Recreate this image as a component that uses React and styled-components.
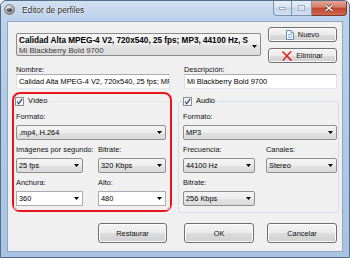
import React from 'react';
import styled, { createGlobalStyle } from 'styled-components';

const GlobalStyle = createGlobalStyle`
  html, body {
    margin: 0;
    padding: 0;
  }
  body {
    width: 350px;
    height: 258px;
    overflow: hidden;
    background: #ffffff;
    font-family: "Liberation Sans", Arial, sans-serif;
    color: #000;
  }
`;

const Window = styled.div`
  width: 350px;
  height: 258px;
  box-sizing: border-box;
  display: flex;
  flex-direction: column;
  border: 1px solid #566d88;
  border-radius: 6px 6px 0 0;
  background: linear-gradient(180deg, #d2e1f1 0px, #bcd1ea 18px, #b1cae7 120px, #a8c3e4 100%);
  overflow: hidden;
`;

const TitleBar = styled.div`
  height: 20px;
  flex-shrink: 0;
  display: flex;
  align-items: flex-start;
`;

const AppIcon = styled.svg`
  width: 11px;
  height: 11px;
  margin: 3px 0 0 3px;
  flex-shrink: 0;
`;

const Title = styled.div`
  margin: 4px 0 0 7px;
  font-size: 8.3px;
  line-height: 10px;
  color: #1c1c1c;
  text-shadow: 0 0 3px #ffffff, 0 0 1px #ffffff;
`;

const CaptionButtons = styled.div`
  display: flex;
  margin: 0 2px 0 auto;
`;

const CaptionButton = styled.div`
  width: ${p => p.$w}px;
  height: 15px;
  box-sizing: border-box;
  display: flex;
  align-items: center;
  justify-content: center;
  border: 1px solid ${p => (p.$close ? '#7b3a33' : '#7d93ad')};
  border-top: none;
  background: ${p =>
    p.$close
      ? 'linear-gradient(180deg, #e6a697 0%, #d67a66 45%, #c2452e 50%, #cf6a4f 100%)'
      : 'linear-gradient(180deg, #e7eff8 0%, #d6e2f0 45%, #c3d3e7 50%, #d2e0f0 100%)'};
  & + & {
    border-left: none;
  }
  &:first-child {
    border-bottom-left-radius: 4px;
  }
  &:last-child {
    border-bottom-right-radius: 4px;
  }
`;

const Frame = styled.div`
  flex: 1;
  display: flex;
  padding: 0 6px 5px;
`;

const Client = styled.div`
  flex: 1;
  display: flex;
  flex-direction: column;
  background: #f0f0f0;
  border: 1px solid #8ea6c2;
  font-size: 7.4px;
`;

const TopRow = styled.div`
  display: flex;
  align-items: flex-start;
  margin-top: 5px;
  padding-left: 8px;
`;

const ProfileCombo = styled.div`
  position: relative;
  width: 245px;
  height: 23px;
  box-sizing: border-box;
  margin-top: 6px;
  padding: 2px 3px 0 2px;
  border: 1px solid #8a8a8a;
  border-radius: 2px;
  background: linear-gradient(180deg, #f6f6f6 0%, #eeeeee 50%, #e4e4e4 51%, #dcdcdc 100%);
  overflow: hidden;
  white-space: nowrap;
`;

const ComboTitle = styled.div`
  font-size: 8.2px;
  font-weight: bold;
  line-height: 10px;
`;

const ComboSub = styled.div`
  font-size: 7.8px;
  line-height: 10px;
  color: #3a3a3a;
`;

const ComboArrow = styled.svg`
  position: absolute;
  right: 3px;
  top: 11px;
  width: 5px;
  height: 3px;
`;

const SideButtons = styled.div`
  display: flex;
  flex-direction: column;
  gap: 6px;
  margin-left: 7px;
`;

const Button = styled.div`
  width: ${p => p.$w || 69}px;
  height: ${p => p.$h || 15}px;
  box-sizing: border-box;
  display: flex;
  align-items: center;
  justify-content: center;
  gap: 4px;
  border: 1px solid #707070;
  border-radius: 3px;
  box-shadow: inset 0 0 0 1px #fbfbfb;
  background: linear-gradient(180deg, #f3f3f3 0%, #ebebeb 50%, #dddddd 51%, #cfcfcf 100%);
  font-size: 7.4px;
  color: #111;
`;

const FieldRow = styled.div`
  display: grid;
  grid-template-columns: 154px 153px;
  column-gap: 14px;
  margin: 2px 0 0 8px;
`;

const Field = styled.div`
  display: flex;
  flex-direction: column;
  min-width: 0;
`;

const Label = styled.div`
  height: ${p => p.$h || 9}px;
  line-height: ${p => p.$h || 9}px;
  margin-bottom: ${p => p.$mb || 0}px;
  white-space: nowrap;
  color: #111;
`;

const TextInput = styled.div`
  height: 15px;
  box-sizing: border-box;
  display: flex;
  align-items: center;
  padding: 0 2px;
  background: #ffffff;
  border: 1px solid #abadb3;
  border-left-color: #dbdfe6;
  border-right-color: #dbdfe6;
  border-bottom-color: #e3e9ef;
  overflow: hidden;
  white-space: nowrap;
`;

const GroupRow = styled.div`
  display: flex;
  align-items: flex-start;
  gap: 6px;
  margin: 3px 0 0 4px;
`;

const Highlight = styled.div`
  width: 160px;
  height: 120px;
  box-sizing: border-box;
  display: flex;
  padding: 2px 0 0;
  border: 2px solid #e8151d;
  border-radius: 8px;
`;

const Group = styled.fieldset`
  margin: ${p => p.$mt || 0}px 0 0;
  padding: 0;
  min-width: 0;
  flex: ${p => (p.$w ? 'none' : 1)};
  width: ${p => (p.$w ? `${p.$w}px` : 'auto')};
  height: ${p => (p.$h ? `${p.$h}px` : 'auto')};
  box-sizing: border-box;
  border: 1px solid ${p => (p.$faint ? '#e6e9ec' : '#d5dfe5')};
  border-radius: 3px;
`;

const Legend = styled.legend`
  display: flex;
  align-items: center;
  gap: 4px;
  height: 10px;
  line-height: 10px;
  padding: 0 2px 0 0;
  margin-left: ${p => p.$ml}px;
`;

const CheckBox = styled.div`
  width: 9px;
  height: 9px;
  box-sizing: border-box;
  display: flex;
  align-items: center;
  justify-content: center;
  border: 1px solid #8e8f8f;
  background: linear-gradient(135deg, #dcdcdc 0%, #f4f4f4 60%, #ffffff 100%);
  box-shadow: inset 0 0 0 1px #f4f4f4;
`;

const GroupBody = styled.div`
  display: flex;
  flex-direction: column;
  gap: 5px;
  padding: 6px ${p => p.$pr}px 0 ${p => p.$pl}px;
`;

const Pair = styled.div`
  display: grid;
  grid-template-columns: ${p => p.$cols};
  column-gap: ${p => p.$gap}px;
`;

const Select = styled.div`
  height: 15px;
  box-sizing: border-box;
  display: flex;
  align-items: center;
  padding: 0 3px 0 2px;
  border: 1px solid ${p => (p.$editable ? '#abadb3' : '#8e8f8f')};
  border-radius: ${p => (p.$editable ? 0 : 2)}px;
  background: ${p =>
    p.$editable
      ? '#ffffff'
      : 'linear-gradient(180deg, #f4f4f4 0%, #ececec 50%, #e2e2e2 51%, #dadada 100%)'};
  white-space: nowrap;
  overflow: hidden;
`;

const SelectText = styled.span`
  flex: 1;
  overflow: hidden;
`;

const BottomRow = styled.div`
  display: flex;
  justify-content: flex-end;
  margin-top: 10px;
  padding-right: 5px;
`;

const Arrow = () => (
  <svg width="5" height="3" viewBox="0 0 5 3">
    <polygon points="0,0 5,0 2.5,3" fill="#000" />
  </svg>
);

const Check = () => (
  <svg width="7" height="7" viewBox="0 0 7 7">
    <path d="M1 3.6 L2.8 5.6 L6.2 0.8" stroke="#3b5188" strokeWidth="1.3" fill="none" />
  </svg>
);

const DropDown = ({ value, editable }) => (
  <Select $editable={editable}>
    <SelectText>{value}</SelectText>
    <Arrow />
  </Select>
);

const LabeledSelect = ({ label, value, editable }) => (
  <Field>
    <Label $h={10} $mb={3}>{label}</Label>
    <DropDown value={value} editable={editable} />
  </Field>
);

const App = () => {
  return (
    <>
      <GlobalStyle />
      <Window>
        <TitleBar>
          <AppIcon viewBox="0 0 11 11">
            <defs>
              <radialGradient id="ic" cx="0.4" cy="0.3" r="0.8">
                <stop offset="0" stopColor="#e4e4e4" />
                <stop offset="1" stopColor="#7d7d7d" />
              </radialGradient>
            </defs>
            <circle cx="5.5" cy="5.5" r="5" fill="url(#ic)" stroke="#5e5e5e" strokeWidth="0.6" />
            <ellipse cx="5.5" cy="6" rx="2.6" ry="1.8" fill="#3c3c3c" />
            <ellipse cx="5" cy="5.6" rx="0.9" ry="0.6" fill="#a9a9a9" />
          </AppIcon>
          <Title>Editor de perfiles</Title>
          <CaptionButtons>
            <CaptionButton $w={19}>
              <svg width="7" height="3" viewBox="0 0 7 3">
                <rect x="0.5" y="0.5" width="6" height="2" fill="#f4f7fb" stroke="#8b9cb2" strokeWidth="0.8" />
              </svg>
            </CaptionButton>
            <CaptionButton $w={20}>
              <svg width="7" height="6" viewBox="0 0 7 6">
                <rect x="0.5" y="0.5" width="6" height="5" fill="none" stroke="#9fb0c4" strokeWidth="1" />
                <rect x="1.5" y="1.5" width="4" height="3" fill="none" stroke="#eef2f8" strokeWidth="0.8" />
              </svg>
            </CaptionButton>
            <CaptionButton $w={35} $close>
              <svg width="10" height="8" viewBox="0 0 10 8">
                <path d="M1.5 1 L8.5 7 M8.5 1 L1.5 7" stroke="#5a2a22" strokeWidth="2.6" />
                <path d="M1.5 1 L8.5 7 M8.5 1 L1.5 7" stroke="#ffffff" strokeWidth="1.5" />
              </svg>
            </CaptionButton>
          </CaptionButtons>
        </TitleBar>

        <Frame>
          <Client>
            <TopRow>
              <ProfileCombo>
                <ComboTitle>Calidad Alta MPEG-4 V2, 720x540, 25 fps; MP3, 44100 Hz, S</ComboTitle>
                <ComboSub>Mi Blackberry Bold 9700</ComboSub>
                <ComboArrow viewBox="0 0 5 3">
                  <polygon points="0,0 5,0 2.5,3" fill="#000" />
                </ComboArrow>
              </ProfileCombo>
              <SideButtons>
                <Button>
                  <svg width="8" height="10" viewBox="0 0 8 10">
                    <path d="M0.5 0.5 H5 L7.5 3 V9.5 H0.5 Z" fill="#ffffff" stroke="#4f7fb8" strokeWidth="0.9" />
                    <path d="M5 0.5 V3 H7.5" fill="#cfe0f3" stroke="#4f7fb8" strokeWidth="0.7" />
                    <path d="M2 4.5 H6 M2 6 H6 M2 7.5 H6" stroke="#7ba5d6" strokeWidth="0.7" />
                  </svg>
                  <span>Nuevo</span>
                </Button>
                <Button>
                  <svg width="10" height="10" viewBox="0 0 10 10">
                    <path d="M1 1 C4 4 6 6 9 9.2" stroke="#e0241c" strokeWidth="1.7" fill="none" strokeLinecap="round" />
                    <path d="M8.8 0.8 C6 3.5 4 6 1.2 9.2" stroke="#e0241c" strokeWidth="1.5" fill="none" strokeLinecap="round" />
                  </svg>
                  <span>Eliminar</span>
                </Button>
              </SideButtons>
            </TopRow>

            <FieldRow>
              <Field>
                <Label>Nombre:</Label>
                <TextInput>Calidad Alta MPEG-4 V2, 720x540, 25 fps; MP</TextInput>
              </Field>
              <Field>
                <Label>Descripción:</Label>
                <TextInput>Mi Blackberry Bold 9700</TextInput>
              </Field>
            </FieldRow>

            <GroupRow>
              <Highlight>
                <Group $faint>
                  <Legend $ml={0}>
                    <CheckBox>
                      <Check />
                    </CheckBox>
                    <span>Vídeo</span>
                  </Legend>
                  <GroupBody $pl={1} $pr={3}>
                    <LabeledSelect label="Formato:" value=".mp4, H.264" />
                    <Pair $cols="67px 68px" $gap={15}>
                      <LabeledSelect label="Imágenes por segundo:" value="25 fps" />
                      <LabeledSelect label="Bitrate:" value="320 Kbps" />
                    </Pair>
                    <Pair $cols="67px 68px" $gap={15}>
                      <LabeledSelect label="Anchura:" value="360" editable />
                      <LabeledSelect label="Alto:" value="480" editable />
                    </Pair>
                  </GroupBody>
                </Group>
              </Highlight>

              <Group $mt={4} $w={161} $h={117}>
                <Legend $ml={4}>
                  <CheckBox>
                    <Check />
                  </CheckBox>
                  <span>Audio</span>
                </Legend>
                <GroupBody $pl={4} $pr={1}>
                  <LabeledSelect label="Formato:" value="MP3" />
                  <Pair $cols="72px 71px" $gap={11}>
                    <LabeledSelect label="Frecuencia:" value="44100 Hz" />
                    <LabeledSelect label="Canales:" value="Stereo" />
                  </Pair>
                  <Pair $cols="72px 71px" $gap={11}>
                    <LabeledSelect label="Bitrate:" value="256 Kbps" />
                  </Pair>
                </GroupBody>
              </Group>
            </GroupRow>

            <BottomRow>
              <Button $w={69} $h={20} style={{ marginRight: 17 }}>Restaurar</Button>
              <Button $w={70} $h={20} style={{ marginRight: 13 }}>OK</Button>
              <Button $w={70} $h={20}>Cancelar</Button>
            </BottomRow>
          </Client>
        </Frame>
      </Window>
    </>
  );
};

export default App;
